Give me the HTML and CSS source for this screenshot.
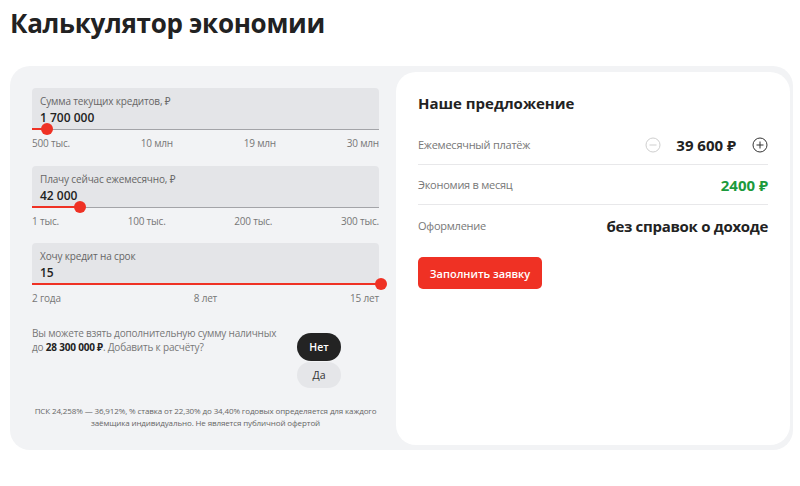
FILE: index.html
```html
<!DOCTYPE html>
<html lang="ru">
<head>
<meta charset="utf-8">
<title>Калькулятор экономии</title>
<link rel="stylesheet" href="styles.css">
</head>
<body>
<h1 class="title">Калькулятор экономии</h1>
<div class="calc">
  <div class="left">
    <div class="slider">
      <div class="box">
        <div class="box-label">Сумма текущих кредитов, ₽</div>
        <div class="box-value">1 700 000</div>
        <div class="track"><div class="fill" style="width:15px"></div><div class="thumb" style="left:15px"></div></div>
      </div>
      <div class="ticks"><span>500 тыс.</span><span>10 млн</span><span>19 млн</span><span>30 млн</span></div>
    </div>
    <div class="slider">
      <div class="box">
        <div class="box-label">Плачу сейчас ежемесячно, ₽</div>
        <div class="box-value">42 000</div>
        <div class="track"><div class="fill" style="width:48px"></div><div class="thumb" style="left:48px"></div></div>
      </div>
      <div class="ticks"><span>1 тыс.</span><span>100 тыс.</span><span>200 тыс.</span><span>300 тыс.</span></div>
    </div>
    <div class="slider">
      <div class="box">
        <div class="box-label">Хочу кредит на срок</div>
        <div class="box-value">15</div>
        <div class="track"><div class="fill" style="width:100%"></div><div class="thumb" style="left:349px"></div></div>
      </div>
      <div class="ticks"><span>2 года</span><span>8 лет</span><span>15 лет</span></div>
    </div>
    <div class="extra">
      <p class="extra-text">Вы можете взять дополнительную сумму наличных<br>до <b>28 300 000 ₽</b>. Добавить к расчёту?</p>
      <div class="choice">
        <button class="pill pill-dark">Нет</button>
        <button class="pill pill-light">Да</button>
      </div>
    </div>
    <p class="note">ПСК 24,258% — 36,912%, % ставка от 22,30% до 34,40% годовых определяется для каждого заёмщика индивидуально. Не является публичной офертой</p>
  </div>
  <div class="offer">
    <h2 class="offer-title">Наше предложение</h2>
    <div class="row">
      <span class="row-label">Ежемесячный платёж</span>
      <span class="row-value stepper">
        <svg class="step step-minus" width="16" height="16" viewBox="0 0 16 16"><circle cx="8" cy="8" r="7" fill="none" stroke="#cfcfcf" stroke-width="1"/><path d="M4.5 8h7" stroke="#cfcfcf" stroke-width="1"/></svg>
        <span class="amount">39 600 ₽</span>
        <svg class="step step-plus" width="16" height="16" viewBox="0 0 16 16"><circle cx="8" cy="8" r="7" fill="none" stroke="#333" stroke-width="1"/><path d="M4.5 8h7M8 4.5v7" stroke="#333" stroke-width="1"/></svg>
      </span>
    </div>
    <div class="row">
      <span class="row-label">Экономия в месяц</span>
      <span class="row-value green">2400 ₽</span>
    </div>
    <div class="row row-last">
      <span class="row-label">Оформление</span>
      <span class="row-value tight">без справок о доходе</span>
    </div>
    <button class="apply">Заполнить заявку</button>
  </div>
</div>
</body>
</html>
```

FILE: styles.css
```css
* { box-sizing: border-box; }
html, body { margin: 0; padding: 0; background: #fff; }
body {
  font-family: "Open Sans", "Noto Sans", sans-serif;
  color: #222;
  width: 800px;
  height: 486px;
  overflow: hidden;
}
.title {
  margin: 0;
  padding: 6px 0 0 10px;
  font-size: 26px;
  line-height: 34px;
  font-weight: 700;
  color: #222;
  letter-spacing: -0.3px;
}
.calc {
  margin: 26px 7px 0 10px;
  height: 384px;
  background: #f2f3f5;
  border-radius: 20px;
  display: flex;
  padding: 6px 3px 5px 0;
}
.left {
  width: 386px;
  padding: 16px 17px 0 22px;
  display: flex;
  flex-direction: column;
}
.slider { margin-bottom: 15.5px; }
.box {
  position: relative;
  height: 42px;
  background: #e4e5e8;
  border-radius: 4px 4px 0 0;
  padding: 6px 8px 0;
  border-bottom: 1px solid #a3a4a8;
}
.box-label {
  font-size: 10px;
  line-height: 14px;
  color: #666;
  letter-spacing: -0.15px;
}
.box-value {
  margin-top: 2px;
  font-size: 12px;
  line-height: 16px;
  font-weight: 600;
  color: #222;
}
.track {
  position: absolute;
  left: 0;
  right: 0;
  bottom: -1px;
  height: 1px;
}
.fill {
  position: absolute;
  left: 0;
  top: -1px;
  height: 2px;
  background: #ef3124;
}
.thumb {
  position: absolute;
  top: -6px;
  width: 12px;
  height: 12px;
  margin-left: -6px;
  border-radius: 50%;
  background: #ef3124;
}
.ticks {
  display: flex;
  justify-content: space-between;
  font-size: 10px;
  line-height: 14px;
  color: #777;
  margin-top: 6px;
  letter-spacing: -0.2px;
}
.extra {
  display: flex;
  margin-top: 5px;
}
.extra-text {
  margin: 0;
  width: 265px;
  font-size: 10px;
  line-height: 14px;
  color: #777;
  letter-spacing: -0.2px;
}
.extra-text b { color: #222; font-weight: 700; }
.choice {
  display: flex;
  flex-direction: column;
  gap: 1px;
  margin-top: 7px;
}
.pill {
  width: 44px;
  height: 28px;
  border: 0;
  border-radius: 14px;
  font-family: inherit;
  font-size: 10.5px;
  font-weight: 600;
  padding: 0;
}
.pill-dark { background: #232323; color: #fff; }
.pill-light { background: #e5e6e9; color: #333; font-weight: 400; height: 26px; }
.note {
  margin: 17px 0 0;
  text-align: center;
  font-size: 8px;
  line-height: 12px;
  color: #666;
  letter-spacing: -0.12px;
}
.offer {
  flex: 1;
  background: #fff;
  border-radius: 20px;
  padding: 21px 22px 0 22px;
}
.offer-title {
  margin: 0 0 12px;
  font-size: 15px;
  line-height: 20px;
  font-weight: 700;
  color: #222;
}
.row {
  display: flex;
  justify-content: space-between;
  align-items: center;
  height: 40px;
  border-bottom: 1px solid #e8e8ea;
}
.row-last { border-bottom: 0; height: 41px; }
.row-label {
  font-size: 11px;
  color: #777;
  letter-spacing: -0.25px;
}
.row-value {
  font-size: 15px;
  font-weight: 700;
  color: #222;
}
.tight { letter-spacing: -0.3px; }
.green { color: #1c9a3c; }
.stepper {
  display: flex;
  align-items: center;
}
.step-minus { margin-right: 15px; }
.step-plus { margin-left: 16px; }
.apply {
  margin-top: 11px;
  width: 124px;
  height: 32px;
  border: 0;
  border-radius: 5px;
  background: #ef3124;
  color: #fff;
  font-family: inherit;
  font-size: 11px;
  font-weight: 600;
  padding: 0;
}
```
